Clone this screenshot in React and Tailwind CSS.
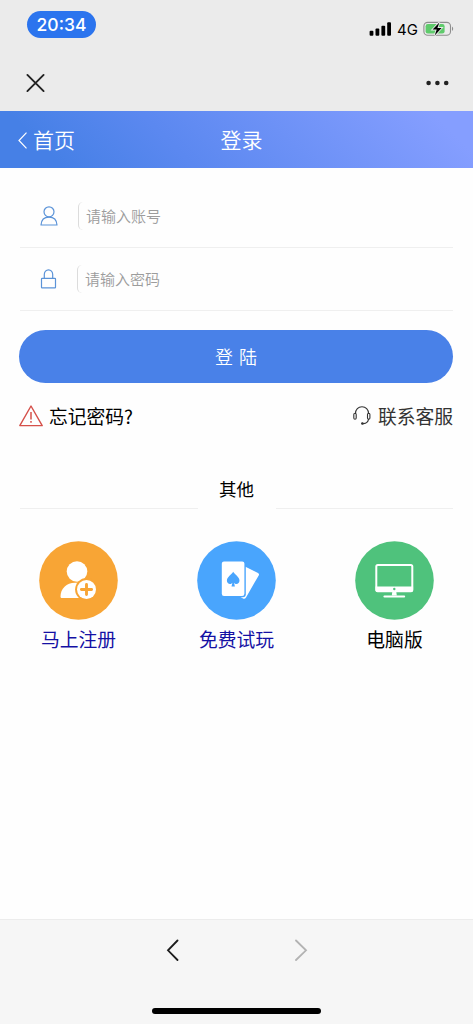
import React from 'react';

const StatusBar = () => (
  <div className="flex h-[52px] items-start justify-between pl-[27px] pr-[18px]">
    <div className="mt-[11px] flex h-[27px] w-[69px] items-center justify-center rounded-full bg-[#2b74ee] font-[Inter] text-[17.5px] font-medium leading-none text-white">
      20:34
    </div>
    <div className="mt-[21px] flex h-4 items-center">
      <svg width="23" height="14" viewBox="0 0 23 14" fill="#000">
        <rect x="0.6" y="8.8" width="3.8" height="5" rx="1" />
        <rect x="6.5" y="6.5" width="3.8" height="7.3" rx="1" />
        <rect x="12.4" y="3.7" width="3.8" height="10.1" rx="1" />
        <rect x="18.2" y="0.3" width="3.8" height="13.5" rx="1" />
      </svg>
      <span className="ml-[5px] w-[21px] font-[Inter] text-[15px] leading-none text-black">4G</span>
      <svg className="ml-[5px]" width="32" height="16" viewBox="0 0 32 16">
        <rect x="0.9" y="1.4" width="26.6" height="12.8" rx="3.8" fill="none" stroke="#8e8e8e" strokeWidth="1.1" />
        <rect x="2.6" y="3.1" width="19" height="9.4" rx="2.2" fill="#5fcb6c" />
        <path d="M29 5.6c1.6.7 1.6 3.7 0 4.4z" fill="#8e8e8e" />
        <path d="M16.4 1.4 9.6 8.6h4.1l-2 5.8 6.9-7.4h-4.2z" fill="#000" stroke="#ebebeb" strokeWidth="1.8" paintOrder="stroke" />
      </svg>
    </div>
  </div>
);

const BrowserBar = () => (
  <div className="flex h-[58px] items-center justify-between pl-[26px] pr-6">
    <svg className="mt-1" width="20" height="20" viewBox="0 0 20 20" stroke="#222" strokeWidth="1.9" strokeLinecap="round">
      <path d="M1.4 1.9 17.6 18.1M17.6 1.9 1.4 18.1" />
    </svg>
    <svg className="mt-1" width="23" height="6" viewBox="0 0 23 6" fill="#222">
      <circle cx="2.6" cy="3" r="2.3" />
      <circle cx="11.4" cy="3" r="2.3" />
      <circle cx="20.2" cy="3" r="2.3" />
    </svg>
  </div>
);

const UserIcon = () => (
  <svg width="18" height="20" viewBox="0 0 18 20" fill="none" stroke="#5b93d8" strokeWidth="1.2" strokeLinejoin="round">
    <circle cx="9" cy="5.8" r="5" />
    <path d="M1 19c.3-4.9 3.2-7.9 8-7.9s7.7 3 8 7.9z" />
  </svg>
);

const LockIcon = () => (
  <svg width="18" height="20" viewBox="0 0 18 20" fill="none" stroke="#5b93d8" strokeWidth="1.2" strokeLinejoin="round">
    <rect x="1.5" y="9.3" width="14" height="9.5" rx="0.6" />
    <path d="M4.3 9.3V5.5a4.2 4.7 0 0 1 8.4 0v3.8" />
  </svg>
);

const fields = [
  { icon: UserIcon, placeholder: '请输入账号', type: 'text', gap: 'ml-[20px]' },
  { icon: LockIcon, placeholder: '请输入密码', type: 'password', gap: 'ml-[19px]' },
];

const Field = ({ icon: Icon, placeholder, type, gap }) => (
  <div className="flex h-[63px] items-center border-b border-[#efefef] pl-5">
    <Icon />
    <input
      type={type}
      placeholder={placeholder}
      className={`${gap} h-7 w-80 rounded-[5px] border-l border-[#dcdcdc] pb-[2px] pl-[7px] text-[15px] font-[350] outline-none placeholder:text-[#9c9c9c]`}
    />
  </div>
);

const RegisterIcon = () => (
  <svg width="79" height="79" viewBox="0 0 79 79">
    <circle cx="39.5" cy="39.5" r="39.3" fill="#f8a535" />
    <circle cx="38" cy="30.5" r="10.3" fill="#fff" />
    <path d="M21.5 55.5c0-8 6-13.8 14.5-13.8h8v15.3H23c-1 0-1.5-.5-1.5-1.5z" fill="#fff" />
    <circle cx="47.5" cy="48.5" r="11.4" fill="#f8a535" />
    <circle cx="47.5" cy="48.5" r="9.5" fill="#fff" />
    <path d="M47.5 43.4v10.2M42.4 48.5h10.2" stroke="#f8a535" strokeWidth="2.9" strokeLinecap="round" />
  </svg>
);

const CardsIcon = () => (
  <svg width="79" height="79" viewBox="0 0 79 79">
    <circle cx="39.5" cy="39.5" r="39.3" fill="#49a5fd" />
    <path d="M47 25 61 32q1.6.9.7 2.4L49 56.5q-1.2 2-3 1l-5-3z" fill="#fff" />
    <rect x="24.2" y="20" width="24.6" height="36.2" rx="3" fill="#49a5fd" />
    <rect x="24.8" y="20.6" width="22.6" height="34.4" rx="2.2" fill="#fff" />
    <path d="M36.2 30.8c1.5 2.7 6.3 5.2 6.3 8.8 0 3.6-3.9 4.4-5.5 2.1l.9 3.7h-3.4l.9-3.7c-1.6 2.3-5.5 1.5-5.500-2.1 0-3.6 4.8-6.1 6.3-8.8z" fill="#49a5fd" />
  </svg>
);

const DesktopIcon = () => (
  <svg width="79" height="79" viewBox="0 0 79 79">
    <circle cx="39.5" cy="39.5" r="39.3" fill="#4fc27c" />
    <rect x="21.3" y="24.1" width="36" height="26" rx="1.5" fill="none" stroke="#fff" strokeWidth="2" />
    <path d="M20.5 45.5h37.6v3.7q0 2-2 2H22.5q-2 0-2-2z" fill="#fff" />
    <circle cx="39.3" cy="48" r="1.2" fill="#4fc27c" />
    <path d="M37.3 51h4l.5 3.5h-5z" fill="#fff" />
    <path d="M29.5 55.5h19.6" stroke="#fff" strokeWidth="2.2" strokeLinecap="round" />
  </svg>
);

const links = [
  { label: '马上注册', icon: RegisterIcon, color: 'text-[#1410a4]' },
  { label: '免费试玩', icon: CardsIcon, color: 'text-[#1410a4]' },
  { label: '电脑版', icon: DesktopIcon, color: 'text-black' },
];

const App = () => (
  <div className="flex h-screen w-full flex-col overflow-hidden bg-[#fefefe] font-['Noto_Sans_CJK_SC',sans-serif] text-black">
    <div className="h-[111px] shrink-0 bg-[#ebebeb]">
      <StatusBar />
      <BrowserBar />
    </div>

    <header className="grid h-[57px] shrink-0 grid-cols-3 items-center bg-linear-[45deg,#4680e6_12%,#5b88f0_37%,#859eff_92%] text-[21px] font-[350] leading-none text-white">
      <a className="flex items-center pl-[18px]">
        <svg className="mr-[6px] mt-px" width="9" height="17" viewBox="0 0 9 17" fill="none" stroke="#fff" strokeWidth="1.2">
          <path d="M8.5.7 1 8.5l7.500 7.8" />
        </svg>
        首页
      </a>
      <h1 className="pl-[10px] text-center">登录</h1>
    </header>

    <main className="flex-1 px-5">
      <form className="pt-[17px]">
        {fields.map((field) => (
          <Field key={field.type} {...field} />
        ))}
        <button
          type="button"
          className="-ml-px mt-[19px] flex h-[53px] w-[434px] items-center justify-center gap-[6px] rounded-full bg-[#4981e8] text-[18px] font-[350] text-white"
        >
          <span>登</span>
          <span>陆</span>
        </button>
      </form>

      <div className="-ml-px mt-[19px] flex h-7 items-center justify-between text-[18.8px] leading-7">
        <a className="flex items-center">
          <svg className="mr-[6px]" width="24" height="22" viewBox="0 0 24 22" fill="none" stroke="#d5504a" strokeWidth="1.4" strokeLinejoin="round">
            <path d="M12 1 23.2 20.6H.8z" />
            <path d="M12 7v7.6M12 16v1.700" strokeWidth="1.5" />
          </svg>
          忘记密码?
        </a>
        <a className="flex items-center text-[#333]">
          <svg className="mb-[2px] mr-[7px]" width="18" height="19" viewBox="0 0 18 19" fill="none" stroke="#333" strokeWidth="1.1" strokeLinecap="round">
            <path d="M2.5 7.5C2.5 3.5 5.2.8 9 .8s6.500 2.7 6.500 6.7" />
            <rect x="0.8" y="7.3" width="2.4" height="6" rx="1.2" />
            <rect x="14.5" y="7.3" width="2.4" height="6" rx="1.2" />
            <path d="M15.5 13.3c-.5 2.6-2 4-5 4.3" />
            <circle cx="9.4" cy="17.5" r="0.8" fill="#333" />
          </svg>
          联系客服
        </a>
      </div>

      <div className="mt-[40px] flex h-[39px] items-end">
        <div className="h-px flex-1 bg-[#efefef]" />
        <h2 className="w-[78px] self-center pb-px text-center text-[17.5px] leading-none">其他</h2>
        <div className="h-px flex-1 bg-[#efefef]" />
      </div>

      <div className="mt-8 flex justify-between px-[19px]">
        {links.map(({ label, icon: Icon, color }) => (
          <a key={label} className={`flex w-[79px] flex-col items-center text-[18.8px] leading-7 ${color}`}>
            <Icon />
            <span className="mt-[5px] whitespace-nowrap">{label}</span>
          </a>
        ))}
      </div>
    </main>

    <footer className="flex h-[105px] shrink-0 flex-col items-center justify-between border-t border-[#ececec] bg-[#f6f6f6] pb-[10px] pt-[19px]">
      <div className="flex w-[142px] justify-between">
        <svg width="13" height="22" viewBox="0 0 13 22" fill="none" stroke="#1c1c1c" strokeWidth="1.8" strokeLinecap="round">
          <path d="M11.500 1.500 2 11.300l9.500 9.700" />
        </svg>
        <svg width="13" height="22" viewBox="0 0 13 22" fill="none" stroke="#b3b3b3" strokeWidth="1.8" strokeLinecap="round">
          <path d="M1 1.500 11 11.300 1 21" />
        </svg>
      </div>
      <div className="h-[6px] w-[169px] rounded-full bg-black" />
    </footer>
  </div>
);

export default App;
